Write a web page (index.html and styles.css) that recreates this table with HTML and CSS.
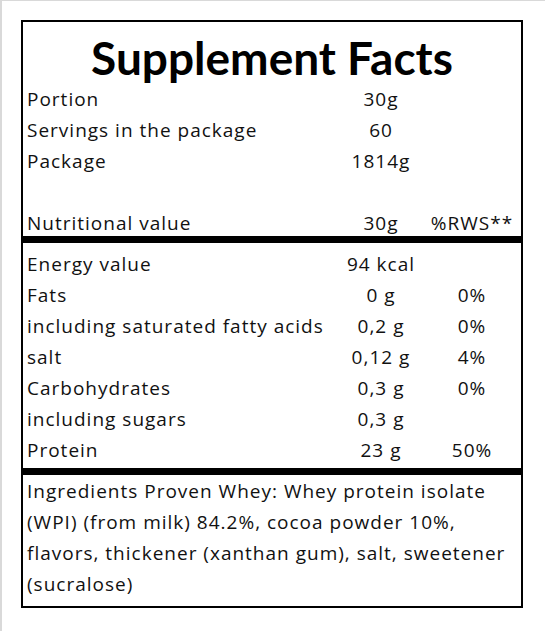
FILE: index.html
```html
<!DOCTYPE html>
<html lang="en">
  <head>
    <meta charset="UTF-8" />
    <meta name="viewport" content="width=device-width, initial-scale=1.0" />
    <title>Supplement Facts</title>
    <link rel="stylesheet" href="styles.css">
  </head>
  <body>
    <div class="page">
      <div class="facts">
        <h1 class="title">Supplement Facts</h1>

        <div class="rows top">
          <div class="label">Portion</div>
          <div class="value">30g</div>
          <div class="rws"></div>

          <div class="label">Servings in the package</div>
          <div class="value">60</div>
          <div class="rws"></div>

          <div class="label">Package</div>
          <div class="value">1814g</div>
          <div class="rws"></div>

          <div class="label">&nbsp;</div>
          <div class="value"></div>
          <div class="rws"></div>

          <div class="label">Nutritional value</div>
          <div class="value">30g</div>
          <div class="rws">%RWS**</div>
        </div>

        <div class="rows nutrients">
          <div class="label">Energy value</div>
          <div class="value">94 kcal</div>
          <div class="rws"></div>

          <div class="label">Fats</div>
          <div class="value">0 g</div>
          <div class="rws">0%</div>

          <div class="label">including saturated fatty acids</div>
          <div class="value">0,2 g</div>
          <div class="rws">0%</div>

          <div class="label">salt</div>
          <div class="value">0,12 g</div>
          <div class="rws">4%</div>

          <div class="label">Carbohydrates</div>
          <div class="value">0,3 g</div>
          <div class="rws">0%</div>

          <div class="label">including sugars</div>
          <div class="value">0,3 g</div>
          <div class="rws"></div>

          <div class="label">Protein</div>
          <div class="value">23 g</div>
          <div class="rws">50%</div>
        </div>

        <p class="ingredients">
          Ingredients Proven Whey: Whey protein isolate (WPI) (from milk) 84.2%, cocoa powder 10%, flavors, thickener (xanthan gum), salt, sweetener (sucralose)
        </p>
      </div>
    </div>
  </body>
</html>
```

FILE: styles.css
```css
body {
  margin: 0;
  background-color: #ffffff;
  font-family: "Open Sans", "Liberation Sans", sans-serif;
  color: #111111;
}

.page {
  min-height: 631px;
  box-sizing: border-box;
  border-top: 1px solid #d9d9d9;
  border-left: 2px solid #d9d9d9;
  padding: 19px 0 0 19px;
}

.facts {
  width: 502px;
  box-sizing: border-box;
  border: 2px solid #000;
}

.title {
  margin: 0;
  height: 59px;
  text-align: center;
  font-family: "Lato", "Liberation Sans", sans-serif;
  font-size: 46px;
  font-weight: 700;
  line-height: 72px;
  color: #000;
}

.rows {
  display: grid;
  grid-template-columns: 1fr 92px 90px;
  grid-auto-rows: 31px;
  padding: 0 4px;
  font-size: 19px;
  line-height: 31px;
  letter-spacing: 1px;
}

.rows > div {
  padding-top: 3px;
  white-space: nowrap;
}

.top {
  border-bottom: 7px solid #000;
}

.nutrients {
  padding-top: 3px;
  padding-bottom: 5px;
  border-bottom: 7px solid #000;
}

.value,
.rws {
  text-align: center;
}

.ingredients {
  margin: 0;
  padding: 1px 4px 6px;
  font-size: 19px;
  line-height: 31px;
  letter-spacing: 1px;
}
```
